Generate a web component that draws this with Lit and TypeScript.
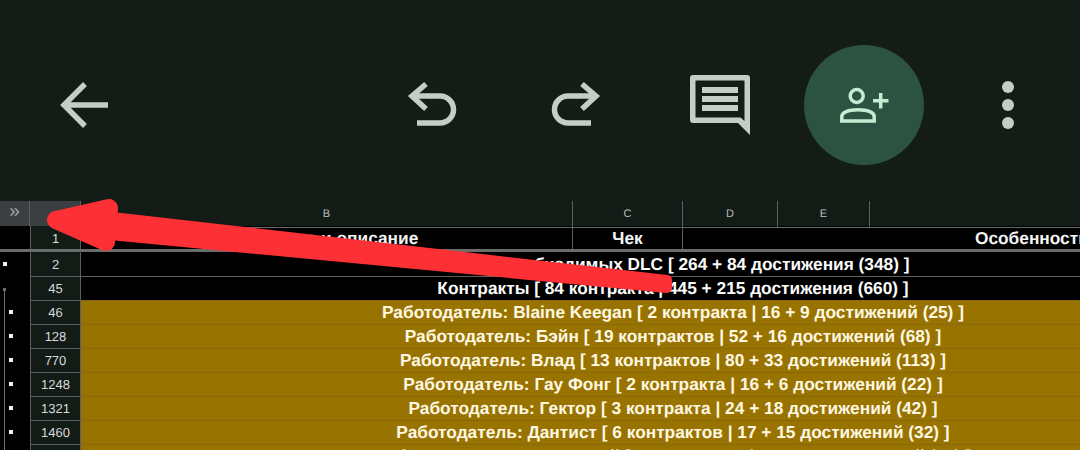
import { LitElement, html, css, svg } from "lit";
import { customElement } from "lit/decorators.js";

const rows = [
  { n: "46", t: "Работодатель: Blaine Keegan [ 2 контракта | 16 + 9 достижений (25) ]" },
  { n: "128", t: "Работодатель: Бэйн [ 19 контрактов | 52 + 16 достижений (68) ]" },
  { n: "770", t: "Работодатель: Влад [ 13 контрактов | 80 + 33 достижений (113) ]" },
  { n: "1248", t: "Работодатель: Гау Фонг [ 2 контракта | 16 + 6 достижений (22) ]" },
  { n: "1321", t: "Работодатель: Гектор [ 3 контракта | 24 + 18 достижений (42) ]" },
  { n: "1460", t: "Работодатель: Дантист [ 6 контрактов | 17 + 15 достижений (32) ]" },
  { n: "1509", t: "Работодатель: Дэвид Мэлой [ 34 контракта | 14 + 62 достижений (76) ]" },
];

@customElement("app-root")
export class AppRoot extends LitElement {
  static styles = css`
    :host { display: block; width: 1080px; height: 450px; overflow: hidden; position: relative; background: #000; font-family: "Liberation Sans", Arial, sans-serif; text-rendering: geometricPrecision; }
    .toolbar { position: relative; height: 201px; background: #131c17; }
    .toolbar svg { display: block; position: absolute; left: 0; top: 0; }
    .grid { width: 1265px; }
    .row { display: grid; grid-template-columns: 30px 51px 492px 110px 95px 92px 395px; box-sizing: border-box; }
    .colhead { height: 25px; background: #131b17; color: #b9bdba; font-size: 11px; }
    .colhead > div { display: flex; align-items: center; justify-content: center; border-right: 1px solid #5c605e; border-bottom: 1px solid #686c6a; box-sizing: border-box; }
    .colhead .corner { background: #3b3f41; color: #a4a8aa; font-size: 19px; padding-bottom: 4px; }
    .colhead .a { background: #3b3f41; }
    .head { height: 26px; background: #000; color: #f4f4f4; font-weight: 700; font-size: 17.3px; border-bottom: 3px solid #696d6b; }
    .head > div { display: flex; align-items: center; justify-content: center; border-right: 1px solid #5c605e; box-sizing: border-box; white-space: nowrap; padding-top: 1px; }
    .head .rn, .body .rn { background: #131b17; color: #d8dad8; font-weight: 400; font-size: 13px; border-left: 1px solid #5c605e; border-right: 1px solid #5c605e; }
    .head > .gut { border-right: 0; }
    .head .f { justify-content: flex-start; padding-left: 292px; border-right: 0; grid-column: 5 / span 3; }
    .body { display: grid; grid-template-columns: 30px 51px 1184px; height: 24px; box-sizing: border-box; }
    .body > div { display: flex; align-items: center; justify-content: center; box-sizing: border-box; border-top: 1px solid #5c605e; }
    .body.first > div { border-top-color: transparent; }
    .gut { background: #000; position: relative; }
    .body > .gut { border-top: 0; justify-content: flex-start; }
    .bullet { width: 4px; height: 4px; background: #f0f0f0; margin-left: 3px; }
    .in .bullet { margin-left: 9px; }
    .in.gut::before { content: ""; position: absolute; left: 4px; top: 0; bottom: 0; width: 1px; background: #6a6e6c; }
    .start.gut::before { content: ""; position: absolute; left: 4px; top: 12px; bottom: 0; width: 1px; background: #6a6e6c; }
    .start.gut::after { content: ""; position: absolute; left: 3px; top: 12px; width: 3px; height: 3px; background: #6a6e6c; }
    .cell { color: #fbfbfb; font-weight: 700; font-size: 17.3px; background: #000; white-space: nowrap; }
    .gold { background: #997300; color: #fff8e2; border-top-color: #866a12 !important; }
    .arrow { position: absolute; left: 0; top: 0; pointer-events: none; }
  `;

  private icons() {
    const fg = "#c5cdc6";
    return html`<svg width="1080" height="201" viewBox="0 0 1080 201" fill="none">
      ${svg`
      <g stroke=${fg} stroke-width="5.5">
        <path d="M108 105H64M85 84L64 105L85 126"/>
        <path d="M426 84L412 96L426 109"/>
        <path d="M412 96H440a13.5 13.5 0 0 1 0 27H417"/>
        <path d="M582 84L596 96L582 109"/>
        <path d="M596 96H568a13.5 13.5 0 0 0 0 27H591"/>
      </g>
      <path fill=${fg} fill-rule="evenodd" d="M693 75H747a3 3 0 0 1 3 3V135L738 123H693a3 3 0 0 1-3-3V78a3 3 0 0 1 3-3ZM695.500 80.500V117.500H740.500L744.500 121V80.500Z"/>
      <path fill=${fg} d="M702 87H738V93H702ZM702 96H738V102H702ZM702 105H738V111H702Z"/>
      <circle cx="864" cy="105" r="60" fill="#2c5342"/>
      <circle cx="856.700" cy="96" r="6.500" stroke="#c3ecd3" stroke-width="3.500"/>
      <path d="M841.800 121V116.500C841.800 112.500 848 109.800 858 109.800C868 109.800 874.200 112.500 874.200 116.500V121Z" stroke="#c3ecd3" stroke-width="3.500"/>
      <path d="M873 100.700H888.500M880.700 93V108.500" stroke="#c3ecd3" stroke-width="3.500"/>
      <circle cx="1008" cy="87" r="6" fill=${fg}/>
      <circle cx="1008" cy="105" r="6" fill=${fg}/>
      <circle cx="1008" cy="123" r="6" fill=${fg}/>
      `}
    </svg>`;
  }

  render() {
    return html`
      <div class="toolbar">${this.icons()}</div>
      <div class="grid">
        <div class="row colhead">
          <div class="corner">»</div><div class="a"></div><div>B</div><div>C</div><div>D</div><div>E</div><div></div>
        </div>
        <div class="row head">
          <div class="gut"></div><div class="rn">1</div><div>Название и описание</div><div>Чек</div>
          <div class="f">Особенности</div>
        </div>
        <div class="body first">
          <div class="gut"><span class="bullet"></span></div><div class="rn">2</div><div class="cell">Список необходимых DLC [ 264 + 84 достижения (348) ]</div>
        </div>
        <div class="body">
          <div class="gut start"></div><div class="rn">45</div><div class="cell">Контракты [ 84 контракта | 445 + 215 достижения (660) ]</div>
        </div>
        ${rows.map((r) => html`<div class="body">
          <div class="gut in"><span class="bullet"></span></div><div class="rn">${r.n}</div><div class="cell gold">${r.t}</div>
        </div>`)}
      </div>
      <svg class="arrow" width="1080" height="450" viewBox="0 0 1080 450">
        <path fill="#fd3036" stroke="#fd3036" stroke-width="18" stroke-linejoin="round" d="M56 220L109 208L106 242Z"/>
        <path fill="#fd3036" stroke="#fd3036" stroke-width="10" stroke-linejoin="round" d="M112 217L667 280V288L110 235Z"/>
      </svg>
    `;
  }
}
